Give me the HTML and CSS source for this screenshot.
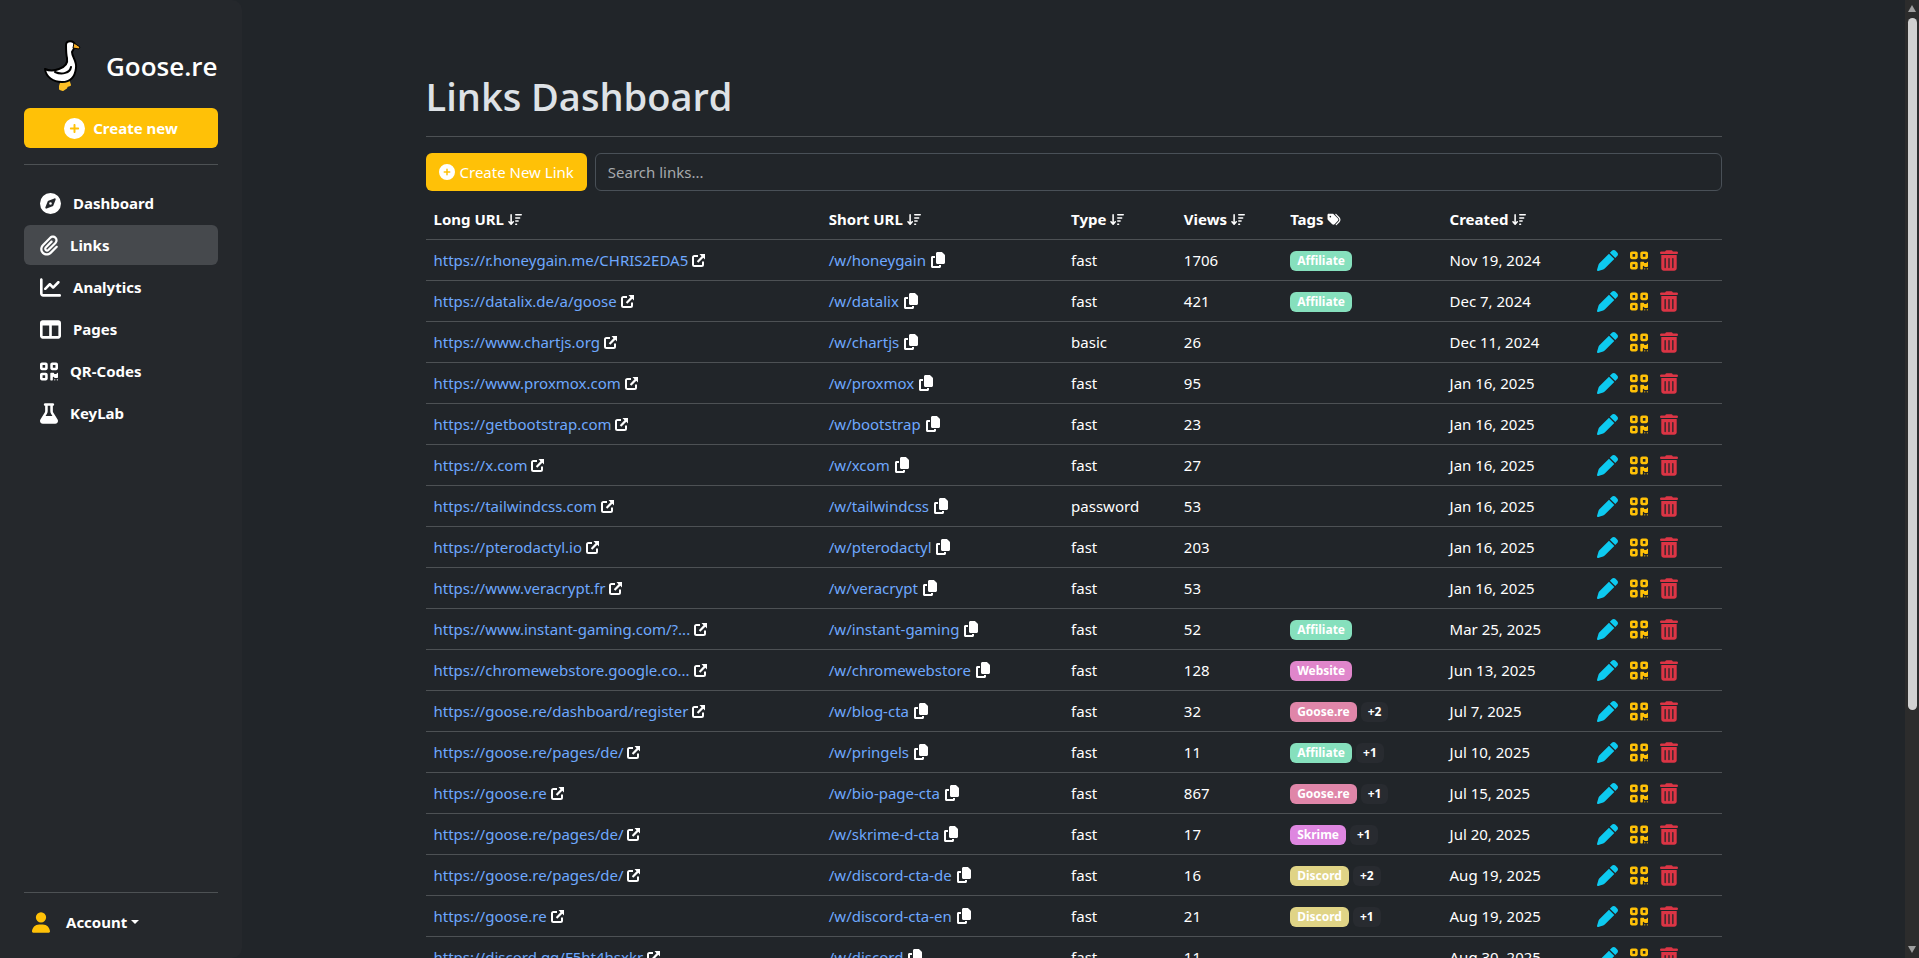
FILE: index.html
```
<!DOCTYPE html>
<html lang="en">
<head>
  <meta charset="UTF-8">
  <meta name="viewport" content="width=device-width, initial-scale=1.0">
  <title>Goose.re - Links</title>
  <link rel="stylesheet" href="styles.css">
</head>
<body>
  <!-- icon sprite -->
  <svg class="sprite" aria-hidden="true">
    <symbol id="plus" viewBox="0 0 512 512"><path d="M256 512A256 256 0 1 0 256 0a256 256 0 1 0 0 512zM232 344V280H168c-13.3 0-24-10.7-24-24s10.7-24 24-24h64V168c0-13.3 10.7-24 24-24s24 10.7 24 24v64h64c13.3 0 24 10.7 24 24s-10.7 24-24 24H280v64c0 13.3-10.7 24-24 24s-24-10.7-24-24z"/></symbol>
    <symbol id="compass" viewBox="0 0 512 512"><path d="M256 512A256 256 0 1 0 256 0a256 256 0 1 0 0 512zm50.7-186.9L162.4 380.6c-19.4 7.5-38.5-11.6-31-31l55.5-144.3c3.3-8.5 9.9-15.1 18.4-18.4l144.3-55.5c19.4-7.5 38.5 11.6 31 31L325.1 306.7c-3.2 8.5-9.9 15.1-18.4 18.4zM288 256a32 32 0 1 0 -64 0 32 32 0 1 0 64 0z"/></symbol>
    <symbol id="clip" viewBox="0 0 448 512"><path d="M364.2 83.8c-24.4-24.4-64-24.4-88.4 0l-184 184c-42.1 42.1-42.1 110.3 0 152.4s110.3 42.1 152.4 0l152-152c10.9-10.9 28.7-10.9 39.6 0s10.9 28.7 0 39.6l-152 152c-64 64-167.6 64-231.6 0s-64-167.6 0-231.6l184-184c46.3-46.3 121.3-46.3 167.6 0s46.3 121.3 0 167.6l-176 176c-28.6 28.6-75 28.6-103.6 0s-28.6-75 0-103.6l144-144c10.9-10.9 28.7-10.9 39.6 0s10.9 28.7 0 39.6l-144 144c-6.7 6.7-6.7 17.7 0 24.4s17.7 6.7 24.4 0l176-176c24.4-24.4 24.4-64 0-88.4z"/></symbol>
    <symbol id="chart" viewBox="0 0 512 512"><path d="M64 64c0-17.7-14.3-32-32-32S0 46.3 0 64V400c0 44.2 35.8 80 80 80H480c17.7 0 32-14.3 32-32s-14.3-32-32-32H80c-8.8 0-16-7.2-16-16V64zm406.6 86.6c12.5-12.5 12.5-32.8 0-45.3s-32.8-12.5-45.3 0L320 210.7l-57.4-57.4c-12.5-12.5-32.8-12.5-45.3 0l-112 112c-12.5 12.5-12.5 32.8 0 45.3s32.8 12.5 45.3 0L240 221.3l57.4 57.4c12.5 12.5 32.8 12.5 45.3 0l128-128z"/></symbol>
    <symbol id="columns" viewBox="0 0 512 512"><path d="M0 96C0 60.7 28.7 32 64 32H448c35.3 0 64 28.7 64 64V416c0 35.3-28.7 64-64 64H64c-35.3 0-64-28.7-64-64V96zm64 64V416H224V160H64zm384 0H288V416H448V160z"/></symbol>
    <symbol id="qr" viewBox="0 0 448 512"><path d="M0 80C0 53.5 21.5 32 48 32h96c26.5 0 48 21.5 48 48v96c0 26.5-21.5 48-48 48H48c-26.5 0-48-21.5-48-48V80zM64 96v64h64V96H64zM0 336c0-26.5 21.5-48 48-48h96c26.5 0 48 21.5 48 48v96c0 26.5-21.5 48-48 48H48c-26.5 0-48-21.5-48-48V336zm64 16v64h64V352H64zM304 32h96c26.5 0 48 21.5 48 48v96c0 26.5-21.5 48-48 48H304c-26.5 0-48-21.5-48-48V80c0-26.5 21.5-48 48-48zm80 64H320v64h64V96zM256 304c0-8.8 7.2-16 16-16h64c8.8 0 16 7.2 16 16s7.2 16 16 16h32c8.8 0 16-7.2 16-16s7.2-16 16-16s16 7.2 16 16v96c0 8.8-7.2 16-16 16H368c-8.8 0-16-7.2-16-16s-7.2-16-16-16s-16 7.2-16 16v64c0 8.8-7.2 16-16 16H272c-8.8 0-16-7.2-16-16V304zM368 480a16 16 0 1 1 0-32 16 16 0 1 1 0 32zm64 0a16 16 0 1 1 0-32 16 16 0 1 1 0 32z"/></symbol>
    <symbol id="flask" viewBox="0 0 448 512"><path d="M288 0H160 128C110.3 0 96 14.3 96 32s14.3 32 32 32V196.8c0 11.8-3.3 23.5-9.5 33.5L10.3 406.2C3.6 417.2 0 429.7 0 442.6C0 480.9 31.1 512 69.4 512H378.6c38.3 0 69.4-31.1 69.4-69.4c0-12.8-3.6-25.4-10.3-36.4L329.5 230.4c-6.2-10.1-9.5-21.7-9.5-33.5V64c17.7 0 32-14.3 32-32s-14.3-32-32-32H288zM192 196.8V64h64V196.8c0 23.7 6.6 46.9 19 67.1L309.5 320h-171L173 263.9c12.4-20.2 19-43.4 19-67.1z"/></symbol>
    <symbol id="user" viewBox="0 0 448 512"><path d="M224 256A128 128 0 1 0 224 0a128 128 0 1 0 0 256zm-45.7 48C79.8 304 0 383.8 0 482.3C0 498.7 13.3 512 29.7 512H418.3c16.4 0 29.7-13.3 29.7-29.7C448 383.8 368.2 304 269.7 304H178.3z"/></symbol>
    <symbol id="sort" viewBox="0 0 576 512"><path d="M151.6 469.6C145.5 476.2 137 480 128 480s-17.5-3.8-23.6-10.4l-88-96c-11.9-13-11.1-33.3 2-45.2s33.3-11.1 45.2 2L96 365.7V64c0-17.7 14.3-32 32-32s32 14.3 32 32V365.7l32.4-35.4c11.9-13 32.2-13.9 45.2-2s13.9 32.2 2 45.2l-88 96zM320 480c-17.7 0-32-14.3-32-32s14.3-32 32-32h32c17.7 0 32 14.3 32 32s-14.3 32-32 32H320zm0-128c-17.7 0-32-14.3-32-32s14.3-32 32-32h96c17.7 0 32 14.3 32 32s-14.3 32-32 32H320zm0-128c-17.7 0-32-14.3-32-32s14.3-32 32-32H480c17.7 0 32 14.3 32 32s-14.3 32-32 32H320zm0-128c-17.7 0-32-14.3-32-32s14.3-32 32-32H544c17.7 0 32 14.3 32 32s-14.3 32-32 32H320z"/></symbol>
    <symbol id="tags" viewBox="0 0 512 512"><path d="M345 39.1L472.8 168.4c52.4 53 52.4 138.2 0 191.2L360.8 472.9c-9.3 9.4-24.5 9.5-33.9 .2s-9.5-24.5-.2-33.9L438.6 325.9c33.9-34.3 33.9-89.4 0-123.7L310.9 72.9c-9.3-9.4-9.2-24.6 .2-33.9s24.6-9.2 33.9 .2zM0 229.5V80C0 53.5 21.5 32 48 32H197.5c17 0 33.3 6.7 45.3 18.7l168 168c25 25 25 65.5 0 90.5L277.3 442.7c-25 25-65.5 25-90.5 0l-168-168C6.7 262.7 0 246.5 0 229.5zM144 144a32 32 0 1 0 -64 0 32 32 0 1 0 64 0z"/></symbol>
    <symbol id="open" viewBox="0 0 13 13"><path d="M6 1H2.5A2.5 2.5 0 0 0 0 3.5V10.5A2.5 2.5 0 0 0 2.5 13H9.5A2.5 2.5 0 0 0 12 10.5V7.5H10V11H2V3H6zM7.500 0H13V5.500L11.300 3.800L6.300 8.800L4.800 7.300L9.500 2.200z"/></symbol>
    <symbol id="copy" viewBox="0 0 448 512"><path d="M208 0H332.1c12.7 0 24.9 5.1 33.9 14.1l67.9 67.9c9 9 14.1 21.2 14.1 33.9V336c0 26.5-21.5 48-48 48H208c-26.5 0-48-21.5-48-48V48c0-26.5 21.5-48 48-48zM48 128h80v64H64V448H256V416h64v48c0 26.5-21.5 48-48 48H48c-26.5 0-48-21.5-48-48V176c0-26.5 21.5-48 48-48z"/></symbol>
    <symbol id="pen" viewBox="0 0 512 512"><path d="M362.7 19.3L314.3 67.7 444.3 197.7l48.4-48.4c25-25 25-65.5 0-90.5L453.3 19.3c-25-25-65.5-25-90.5 0zm-71 71L58.6 323.5c-10.4 10.4-18 23.3-22.2 37.4L1 481.2C-1.5 489.7 .8 498.8 7 505s15.3 8.5 23.7 6.1l120.3-35.4c14.1-4.2 27-11.8 37.4-22.2L421.7 220.3 291.7 90.3z"/></symbol>
    <symbol id="trash" viewBox="0 0 448 512"><path d="M135.2 17.7C140.6 6.8 151.7 0 163.8 0H284.2c12.1 0 23.2 6.8 28.6 17.7L320 32h96c17.7 0 32 14.3 32 32s-14.3 32-32 32H32C14.3 96 0 81.7 0 64S14.3 32 32 32h96l7.2-14.3zM32 120H416V448c0 35.3-28.7 64-64 64H96c-35.3 0-64-28.7-64-64V120zm96 72c-8.800 0-16 7.200-16 16V432c0 8.800 7.200 16 16 16s16-7.200 16-16V208c0-8.800-7.200-16-16-16zm96 0c-8.800 0-16 7.200-16 16V432c0 8.800 7.200 16 16 16s16-7.200 16-16V208c0-8.800-7.200-16-16-16zm96 0c-8.800 0-16 7.200-16 16V432c0 8.800 7.200 16 16 16s16-7.200 16-16V208c0-8.800-7.200-16-16-16z"/></symbol>
  </svg>

  <div class="layout">
    <aside class="sidebar">
      <a class="brand" href="#">
        <svg class="brand-logo" viewBox="0 0 45 60" aria-hidden="true">
          <path d="M21 47l-1 3 0 3 3 1 3-2 1-2 3-1-1-3z" fill="#fdbf26" stroke="#fdbf26" stroke-width="2" stroke-linejoin="round"/>
          <path d="M26 9c0-5 8-5 9 0 0 3-2 5-3 7 0 5 5 9 4 16-1 9-6 14-14 14C13 46 6 41 5 33c4 2 9 2 14 0 6-2 9-6 8-11-1-4-1-8-1-13z" fill="#fff" stroke="#000" stroke-width="2" stroke-linejoin="round"/>
          <path d="M31 31c-1 6-9 8-16 5" fill="none" stroke="#000" stroke-width="2" stroke-linecap="round"/>
          <path d="M34 7l6 4-1 2-6-1z" fill="#f5ac24" stroke="#000" stroke-width="1" stroke-linejoin="round"/>
          <circle cx="31" cy="9" r="1"/>
        </svg>
        <span>Goose.re</span>
      </a>
      <button class="btn btn-new" type="button"><svg class="icon"><use href="#plus"/></svg>Create new</button>
      <hr>
      <nav class="nav">
        <a href="#"><svg class="icon"><use href="#compass"/></svg>Dashboard</a>
        <a class="active" href="#"><svg class="icon icon-narrow"><use href="#clip"/></svg>Links</a>
        <a href="#"><svg class="icon"><use href="#chart"/></svg>Analytics</a>
        <a href="#"><svg class="icon"><use href="#columns"/></svg>Pages</a>
        <a href="#"><svg class="icon icon-narrow"><use href="#qr"/></svg>QR-Codes</a>
        <a href="#"><svg class="icon icon-narrow"><use href="#flask"/></svg>KeyLab</a>
      </nav>
      <hr class="account-line">
      <button class="account" type="button"><svg class="icon icon-narrow"><use href="#user"/></svg>Account<span class="caret"></span></button>
    </aside>

    <main class="content">
      <div class="container">
        <h1>Links Dashboard</h1>
        <hr>
        <div class="toolbar">
          <button class="btn" type="button"><svg class="icon-add"><use href="#plus"/></svg>Create New Link</button>
          <input id="search" type="text" placeholder="Search links..." aria-label="Search links">
        </div>
        <table class="links">
          <colgroup>
            <col class="col-long"><col class="col-short"><col class="col-type"><col class="col-views"><col class="col-tags"><col class="col-created"><col>
          </colgroup>
          <thead>
            <tr>
              <th>Long URL <svg class="icon-sort"><use href="#sort"/></svg></th>
              <th>Short URL <svg class="icon-sort"><use href="#sort"/></svg></th>
              <th>Type <svg class="icon-sort"><use href="#sort"/></svg></th>
              <th>Views <svg class="icon-sort"><use href="#sort"/></svg></th>
              <th>Tags <svg class="icon-sort"><use href="#tags"/></svg></th>
              <th>Created <svg class="icon-sort"><use href="#sort"/></svg></th>
              <td></td>
            </tr>
          </thead>
          <tbody id="linkRows"></tbody>
        </table>
      </div>
    </main>

    <div class="scrollbar" aria-hidden="true">
      <span class="arrow arrow-up"></span>
      <span class="thumb"></span>
      <span class="arrow arrow-down"></span>
    </div>
  </div>

  <script>
    // long url, short url, type, views, tag, more tags, created
    const links = [
      ["https://r.honeygain.me/CHRIS2EDA5", "honeygain", "fast", 1706, "Affiliate", 0, "Nov 19, 2024"],
      ["https://datalix.de/a/goose", "datalix", "fast", 421, "Affiliate", 0, "Dec 7, 2024"],
      ["https://www.chartjs.org", "chartjs", "basic", 26, "", 0, "Dec 11, 2024"],
      ["https://www.proxmox.com", "proxmox", "fast", 95, "", 0, "Jan 16, 2025"],
      ["https://getbootstrap.com", "bootstrap", "fast", 23, "", 0, "Jan 16, 2025"],
      ["https://x.com", "xcom", "fast", 27, "", 0, "Jan 16, 2025"],
      ["https://tailwindcss.com", "tailwindcss", "password", 53, "", 0, "Jan 16, 2025"],
      ["https://pterodactyl.io", "pterodactyl", "fast", 203, "", 0, "Jan 16, 2025"],
      ["https://www.veracrypt.fr", "veracrypt", "fast", 53, "", 0, "Jan 16, 2025"],
      ["https://www.instant-gaming.com/?...", "instant-gaming", "fast", 52, "Affiliate", 0, "Mar 25, 2025"],
      ["https://chromewebstore.google.co...", "chromewebstore", "fast", 128, "Website", 0, "Jun 13, 2025"],
      ["https://goose.re/dashboard/register", "blog-cta", "fast", 32, "Goose.re", 2, "Jul 7, 2025"],
      ["https://goose.re/pages/de/", "pringels", "fast", 11, "Affiliate", 1, "Jul 10, 2025"],
      ["https://goose.re", "bio-page-cta", "fast", 867, "Goose.re", 1, "Jul 15, 2025"],
      ["https://goose.re/pages/de/", "skrime-d-cta", "fast", 17, "Skrime", 1, "Jul 20, 2025"],
      ["https://goose.re/pages/de/", "discord-cta-de", "fast", 16, "Discord", 2, "Aug 19, 2025"],
      ["https://goose.re", "discord-cta-en", "fast", 21, "Discord", 1, "Aug 19, 2025"],
      ["https://discord.gg/F5ht4hsxkr", "discord", "fast", 11, "", 0, "Aug 30, 2025"]
    ];
    const tagClass = {
      "Affiliate": "tag-affiliate",
      "Website": "tag-website",
      "Goose.re": "tag-goose",
      "Skrime": "tag-skrime",
      "Discord": "tag-discord"
    };

    document.getElementById("linkRows").innerHTML = links.map(function ([url, slug, type, views, tag, more, created]) {
      const badge = tag ? `<span class="badge ${tagClass[tag]}">${tag}</span>` : "";
      const extra = more ? `<span class="badge tag-more">+${more}</span>` : "";
      return `<tr>
        <td><a href="#">${url}</a> <svg class="icon-open"><use href="#open"/></svg></td>
        <td><a href="#">/w/${slug}</a> <button type="button" aria-label="Copy"><svg class="icon-copy"><use href="#copy"/></svg></button></td>
        <td>${type}</td>
        <td>${views}</td>
        <td><div class="badges">${badge}${extra}</div></td>
        <td>${created}</td>
        <td><div class="actions">
          <button class="edit" type="button" aria-label="Edit"><svg class="icon"><use href="#pen"/></svg></button>
          <button class="qr" type="button" aria-label="QR code"><svg class="icon icon-narrow"><use href="#qr"/></svg></button>
          <button class="delete" type="button" aria-label="Delete"><svg class="icon icon-narrow"><use href="#trash"/></svg></button>
        </div></td>
      </tr>`;
    }).join("");
  </script>
</body>
</html>
```
FILE: styles.css
```
* {
  box-sizing: border-box;
}
body {
  margin: 0;
  background-color: #212529;
  color: #fff;
  font-family: "Segoe UI", "Noto Sans", sans-serif;
  font-size: 15px;
  line-height: 24px;
}
button {
  padding: 0;
  border: none;
  background: none;
  color: inherit;
  font: inherit;
  cursor: pointer;
}
svg {
  fill: currentColor;
}
a {
  color: #6ea8fe;
  text-decoration: none;
}
hr {
  width: 100%;
  height: 1px;
  margin: 16px 0;
  border: none;
  background-color: #4d5154;
}
.sprite {
  display: none;
}
.layout {
  display: flex;
  height: 100vh;
  overflow: hidden;
}

/* sidebar */
.sidebar {
  display: flex;
  flex-direction: column;
  flex: 0 0 242px;
  padding: 32px 24px 18px;
  background-color: #25282c;
  border-radius: 0 10px 10px 0;
}
.brand {
  display: flex;
  align-items: center;
  gap: 21px;
  height: 68px;
  padding-left: 16px;
  margin-bottom: 8px;
  color: #fff;
  font-family: "Segoe UI", "Open Sans", sans-serif;
  font-size: 26px;
  font-weight: 600;
}
.brand-logo {
  width: 45px;
  height: 60px;
}
.icon {
  width: 21px;
  height: 21px;
  flex: none;
}
.icon-narrow {
  width: 18px;
}
.btn {
  display: inline-flex;
  align-items: center;
  justify-content: center;
  height: 38px;
  padding: 0 13px;
  border-radius: 6px;
  background-color: #ffc107;
  white-space: nowrap;
}
.btn-new {
  gap: 8px;
  height: 40px;
  font-weight: 700;
}
.nav {
  display: flex;
  flex-direction: column;
  flex: 1;
  gap: 2px;
  padding-top: 2px;
}
.nav a {
  display: flex;
  align-items: center;
  gap: 12px;
  height: 40px;
  padding: 0 16px;
  border-radius: 6px;
  color: #fff;
  font-weight: 700;
}
.nav a.active {
  background-color: #46494d;
}
.account-line {
  margin-bottom: 11px;
}
.account {
  display: flex;
  align-items: center;
  height: 36px;
  padding: 0 8px;
  font-weight: 700;
}
.account .icon {
  margin-right: 16px;
  color: #ffc107;
}
.caret {
  margin-left: 4px;
  border-top: 4px solid #fff;
  border-left: 4px solid transparent;
  border-right: 4px solid transparent;
}

/* content */
.content {
  flex: 1;
  min-width: 0;
}
.container {
  max-width: 1320px;
  margin: 0 auto;
  padding: 72px 12px 0;
}
h1 {
  margin: 0;
  color: #dee2e6;
  font-family: "Segoe UI", "Open Sans", sans-serif;
  font-size: 38px;
  font-weight: 600;
  line-height: 48px;
}
.toolbar {
  display: flex;
  gap: 8px;
  margin-bottom: 8px;
}
.icon-add {
  width: 16px;
  height: 16px;
  margin-right: 5px;
}
.toolbar input {
  flex: 1;
  height: 38px;
  padding: 0 12px;
  border: 1px solid #495057;
  border-radius: 6px;
  background-color: #212529;
  color: #dee2e6;
  font: inherit;
}
.toolbar input::placeholder {
  color: #a6a9ad;
}

/* table */
.links {
  width: 100%;
  table-layout: fixed;
  border-collapse: separate;
  border-spacing: 0;
}
.col-long { width: 30.5%; }
.col-short { width: 18.7%; }
.col-type { width: 8.7%; }
.col-views { width: 8.2%; }
.col-tags { width: 12.3%; }
.col-created { width: 11.4%; }
.links th,
.links td {
  height: 41px;
  padding: 0 8px;
  border-bottom: 1px solid #4d5154;
  text-align: left;
  white-space: nowrap;
}
.icon-sort {
  width: 14px;
  height: 13px;
  vertical-align: -1px;
}
.icon-open {
  width: 13px;
  height: 13px;
  vertical-align: -1px;
}
.icon-copy {
  width: 16px;
  height: 16px;
  vertical-align: -2px;
}
.badges {
  display: flex;
  gap: 4px;
  padding-top: 2px;
}
.badge {
  padding: 0 7px;
  border-radius: 6px;
  font-size: 12px;
  font-weight: 700;
  line-height: 20px;
}
.tag-affiliate { background-color: #86e0bd; }
.tag-website { background-color: #e086cb; }
.tag-goose { background-color: #e086a9; }
.tag-skrime { background-color: #de86e0; }
.tag-discord { background-color: #e0d486; }
.tag-more { background-color: #282b30; }
.actions {
  display: flex;
  align-items: center;
  gap: 12px;
}
.actions button {
  display: flex;
}
.edit { color: #0dcaf0; }
.qr { color: #ffc107; }
.delete { color: #dc3545; }

/* scrollbar */
.scrollbar {
  display: flex;
  flex-direction: column;
  align-items: center;
  flex: 0 0 14px;
  padding: 5px 0;
  background-color: #2c2c2c;
}
.thumb {
  width: 9px;
  height: 73%;
  margin-top: 6px;
  margin-bottom: auto;
  border-radius: 5px;
  background-color: #d1d1d1;
}
.arrow {
  border-left: 4px solid transparent;
  border-right: 4px solid transparent;
}
.arrow-up { border-bottom: 7px solid #9f9f9f; }
.arrow-down { border-top: 7px solid #9f9f9f; }
```
